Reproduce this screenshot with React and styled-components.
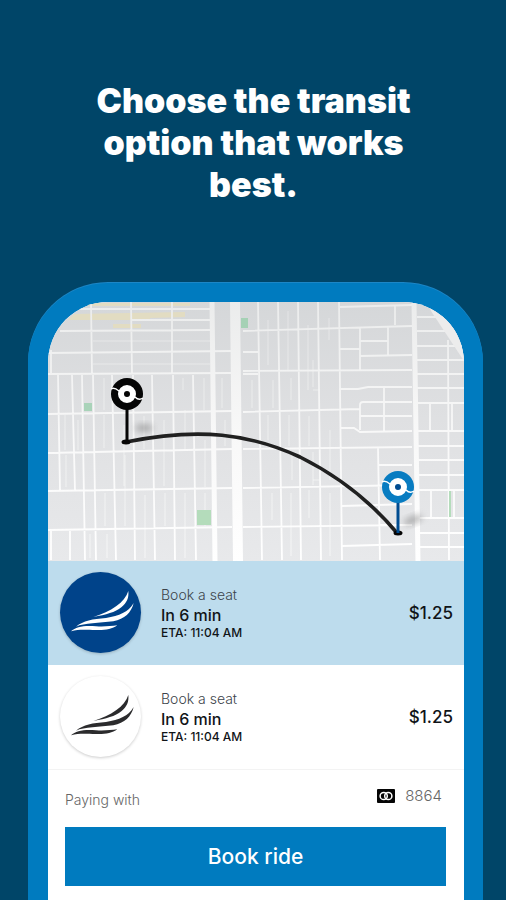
import { useState } from 'react';
import styled, { createGlobalStyle } from 'styled-components';

const rides = [
    { id: 'blue', title: 'Book a seat', time: 'In 6 min', eta: 'ETA: 11:04 AM', price: '$1.25', disc: '#00438a', wing: '#ffffff' },
    { id: 'white', title: 'Book a seat', time: 'In 6 min', eta: 'ETA: 11:04 AM', price: '$1.25', disc: '#ffffff', wing: '#2b2b2d' },
];

const minorRoads = [
    // north west
    'M91 302L92 374M131 302L132 374M172 302L172 374M51 350V374',
    'M80 309H210M131 320H210M60 331L210 330M48 353L232 351M48 374L232 373M243 331L412 326M243 352H258M243 374H258',
    // west
    'M58 375L60 491M72 375L75 491M82 375L85 560M93 375L96 560M112 375L116 560M133 375L135 560M152 375L155 560M173 375L175 560M193 375L196 560',
    'M48 414L232 411M48 453L232 449M48 491L232 488M48 530L232 527M51 530V560M70 530V560',
    // centre
    'M258 302L262 560M278 302L282 560M298 302L301 560M318 302L321 560M339 302L342 560',
    'M243 371L412 370M243 412L360 409M243 449L412 447M243 488L412 485M243 527L412 525',
    // north east
    'M339 307L412 305M395 306V325M360 328V370M339 349H360M360 341H388M388 327V355M360 356L412 355',
    'M339 389H358L368 387H412M384 387V431M412 402H363Q360 402 360 405V430M360 416H412M341 428H354L360 432L412 431',
    'M378 448L380 560M378 465H412M342 506L412 504M342 546L412 544M380 525H412',
    // east side
    'M417 317H464M417 331H464M417 346H464M417 360H464M417 374H464M417 388H464M417 403H464',
    'M418 431H464M418 446H464M418 460H464M418 475H464M418 490H464M418 518H464M418 533H464M418 547H464',
    'M448 340L449 560M430 403V431M452 403V431M431 490V518M454 490V518',
].join('');

const alleys = [
    'M93 341H210M93 364H210M104 378V410M122 378V400M183 378V390M204 378V410M104 415V448M124 425V486M144 416V449M164 420V486M185 410V449M205 440V487',
    'M65 415V450M78 420V450M66 455V487M105 493V526M125 455V526M145 495V558M165 493V526M185 493V558M205 493V526M90 534V558M107 534V558',
    'M222 378V408M225 420V446M252 380V408M268 320V365M273 380V408M288 311V370M291 378V400M308 325V390M329 318V340M313 360V387',
    'M268 415V440M289 415V446M292 452V480M309 416V446M330 430V480M313 452V485M272 493V520M291 493V556M309 490V518M330 493V556M313 480H320M313 390H320',
].join('');

const wingPath = [
    'M217 67C206 103 165 128 112 145C150 138 178 131 196 116C213 101 219 88 217 67Z',
    'M233 103C217 132 190 140 150 148C110 151 82 156 60 174C85 163 130 163 172 158C206 151 226 132 233 103Z',
    'M45 188C60 174 85 170 120 173C145 175 165 172 184 170C168 182 145 185 120 184C90 184 70 181 45 188Z',
].join('');

function Pin({ x, y, color, stem, dot }) {
    return (
        <g>
            <path d={`M${x} ${y + 10}V${y + 46}`} stroke={stem} strokeWidth="3" />
            <circle cx={x} cy={y} r="16" fill={color} />
            <circle cx={x} cy={y} r="6" fill={dot} stroke="#fff" strokeWidth="6" />
            <path
                d={`M${x - 16} ${y - 5}Q${x - 13} ${y - 7} ${x - 8} ${y - 3}M${x + 8} ${y + 3}Q${x + 12} ${y + 7} ${x + 16} ${y + 4}`}
                fill="none"
                stroke="#fff"
                strokeWidth="1.5"
            />
        </g>
    );
}

function RouteMap() {
    return (
        <Map viewBox="48 302 416 259" preserveAspectRatio="xMidYMid slice" role="img" aria-label="Route map">
            <defs>
                <linearGradient id="land" gradientUnits="userSpaceOnUse" x1="0" y1="302" x2="0" y2="561">
                    <stop offset="0" stopColor="#d5d7d9" />
                    <stop offset="0.45" stopColor="#dfe0e2" />
                    <stop offset="1" stopColor="#e8e9eb" />
                </linearGradient>
                <linearGradient id="road" gradientUnits="userSpaceOnUse" x1="0" y1="302" x2="0" y2="561">
                    <stop offset="0" stopColor="#ebecec" />
                    <stop offset="0.5" stopColor="#f8f8f8" />
                    <stop offset="1" stopColor="#ffffff" />
                </linearGradient>
                <filter id="soft" x="-50%" y="-50%" width="200%" height="200%">
                    <feGaussianBlur stdDeviation="3" />
                </filter>
            </defs>
            <rect x="48" y="302" width="416" height="259" fill="url(#land)" />
            <path d="M80 303H190V306H80zM74 314L185 312V317L150 318V320H68zM113 324H141V328H113z" fill="#e2dcc2" />
            <path d="M241 318H248V328H241z" fill="#a5d1b5" />
            <path d="M84 403H92V411H84z" fill="#a9d3b9" />
            <path d={alleys} fill="none" stroke="url(#road)" strokeWidth="1" opacity="0.6" />
            <path d={minorRoads} fill="none" stroke="url(#road)" strokeWidth="1.8" />
            <path d="M197 510H211V525H197z" fill="#b4dcbb" />
            <path d="M212 302L215 561M414 302L418 561" fill="none" stroke="url(#road)" strokeWidth="5" />
            <path d="M235 302L238 561" fill="none" stroke="url(#road)" strokeWidth="10" />
            <path d="M428 302L431 311L464 361V302z" fill="#ececec" />
            <path d="M450 491V517" stroke="#b4dcbb" strokeWidth="2" />
            <ellipse cx="144" cy="428" rx="9" ry="4" fill="#777" opacity="0.5" filter="url(#soft)" />
            <ellipse cx="413" cy="520" rx="10" ry="4" fill="#777" opacity="0.5" filter="url(#soft)" transform="rotate(-20 413 520)" />
            <path d="M126 442C200 427 250 434 300 457C340 477 372 503 397 533" fill="none" stroke="#202020" strokeWidth="3.6" />
            <ellipse cx="126" cy="442" rx="4.5" ry="2.5" fill="#050505" />
            <ellipse cx="398" cy="533" rx="4.5" ry="2.5" fill="#050505" />
            <Pin x={127} y={394} color="#050505" stem="#050505" dot="#050505" />
            <Pin x={398} y={487} color="#087cc1" stem="#004c91" dot="#004c91" />
        </Map>
    );
}

function Ride({ ride, selected, onSelect }) {
    return (
        <RideButton type="button" $selected={selected} aria-pressed={selected} onClick={onSelect}>
            <Disc $color={ride.disc}>
                <svg viewBox="12 10 243 243" aria-hidden="true">
                    <path d={wingPath} fill={ride.wing} />
                </svg>
            </Disc>
            <RideInfo>
                <RideTitle>{ride.title}</RideTitle>
                <RideTime>{ride.time}</RideTime>
                <RideEta>{ride.eta}</RideEta>
            </RideInfo>
            <Price>{ride.price}</Price>
        </RideButton>
    );
}

export default function App() {
    const [selected, setSelected] = useState('blue');

    return (
        <Page>
            <GlobalStyle />
            <Headline>Choose the transit option that works best.</Headline>
            <Phone>
                <RouteMap />
                {rides.map((ride) => (
                    <Ride
                        key={ride.id}
                        ride={ride}
                        selected={selected === ride.id}
                        onSelect={() => setSelected(ride.id)}
                    />
                ))}
                <Checkout>
                    <Payment>
                        <PayingLabel>Paying with</PayingLabel>
                        <Card>
                            <svg width="18" height="14" viewBox="0 0 18 14" aria-hidden="true">
                                <rect width="18" height="14" rx="1" fill="#050505" />
                                <circle cx="6.7" cy="7" r="3.6" fill="none" stroke="#fff" strokeWidth="1.5" />
                                <circle cx="11.3" cy="7" r="3.6" fill="none" stroke="#fff" strokeWidth="1.5" />
                            </svg>
                            <span>8864</span>
                        </Card>
                    </Payment>
                    <BookButton type="button">Book ride</BookButton>
                </Checkout>
            </Phone>
        </Page>
    );
}

const GlobalStyle = createGlobalStyle`
    * {
        box-sizing: border-box;
    }

    body {
        margin: 0;
        background-color: #004568;
        font-family: Inter, 'Liberation Sans', sans-serif;
    }

    button {
        font-family: inherit;
        border: none;
        cursor: pointer;
    }
`;

const Page = styled.main`
    display: flex;
    flex-direction: column;
    min-height: 100vh;
    padding: 80px 23px 0 28px;
`;

const Headline = styled.h1`
    align-self: center;
    max-width: 334px;
    margin: 0 4px 77px 0;
    color: #ffffff;
    font-size: 34px;
    font-weight: 900;
    line-height: 42px;
    text-align: center;
`;

const Phone = styled.section`
    display: flex;
    flex-direction: column;
    flex: 1;
    overflow: hidden;
    border: 19px solid #007bbf;
    border-left-width: 20px;
    border-bottom: none;
    border-radius: 80px 80px 0 0;
    background-color: #ffffff;
    box-shadow: 0 -1px 0 #1c86c6;
`;

const Map = styled.svg`
    display: block;
    width: 100%;
    aspect-ratio: 416 / 259;
`;

const RideButton = styled.button`
    display: flex;
    align-items: center;
    gap: 20px;
    padding: 11px 11px 12px 12px;
    background-color: ${({ $selected }) => ($selected ? '#bddced' : '#ffffff')};
    color: #101418;
    text-align: left;
`;

const Disc = styled.span`
    flex: none;
    width: 81px;
    height: 81px;
    border-radius: 50%;
    background-color: ${({ $color }) => $color};
    box-shadow: 0 1px 3px rgba(0, 0, 0, 0.2);

    svg {
        display: block;
    }
`;

const RideInfo = styled.span`
    display: flex;
    flex-direction: column;
    flex: 1;
`;

const RideTitle = styled.span`
    color: #3c444a;
    font-size: 14px;
    font-weight: 300;
    line-height: 20px;
`;

const RideTime = styled.span`
    font-size: 16px;
    font-weight: 500;
    line-height: 20px;
`;

const RideEta = styled.span`
    font-size: 12px;
    font-weight: 500;
    line-height: 16px;
`;

const Price = styled.span`
    font-size: 17px;
    font-weight: 500;
`;

const Checkout = styled.div`
    padding: 14px 18px 14px 17px;
    border-top: 1px solid #f3f3f3;
`;

const Payment = styled.div`
    display: flex;
    align-items: flex-start;
    justify-content: space-between;
    margin-bottom: 16px;
    padding-right: 4px;
    color: #666666;
`;

const PayingLabel = styled.span`
    padding-top: 5px;
    font-size: 14px;
    font-weight: 300;
    line-height: 22px;
`;

const Card = styled.span`
    display: flex;
    align-items: center;
    gap: 10px;
    font-size: 15px;
    font-weight: 300;
    line-height: 24px;
`;

const BookButton = styled.button`
    width: 100%;
    padding: 15px;
    background-color: #007bbf;
    color: #ffffff;
    font-size: 21px;
    font-weight: 500;
    line-height: 29px;
`;
